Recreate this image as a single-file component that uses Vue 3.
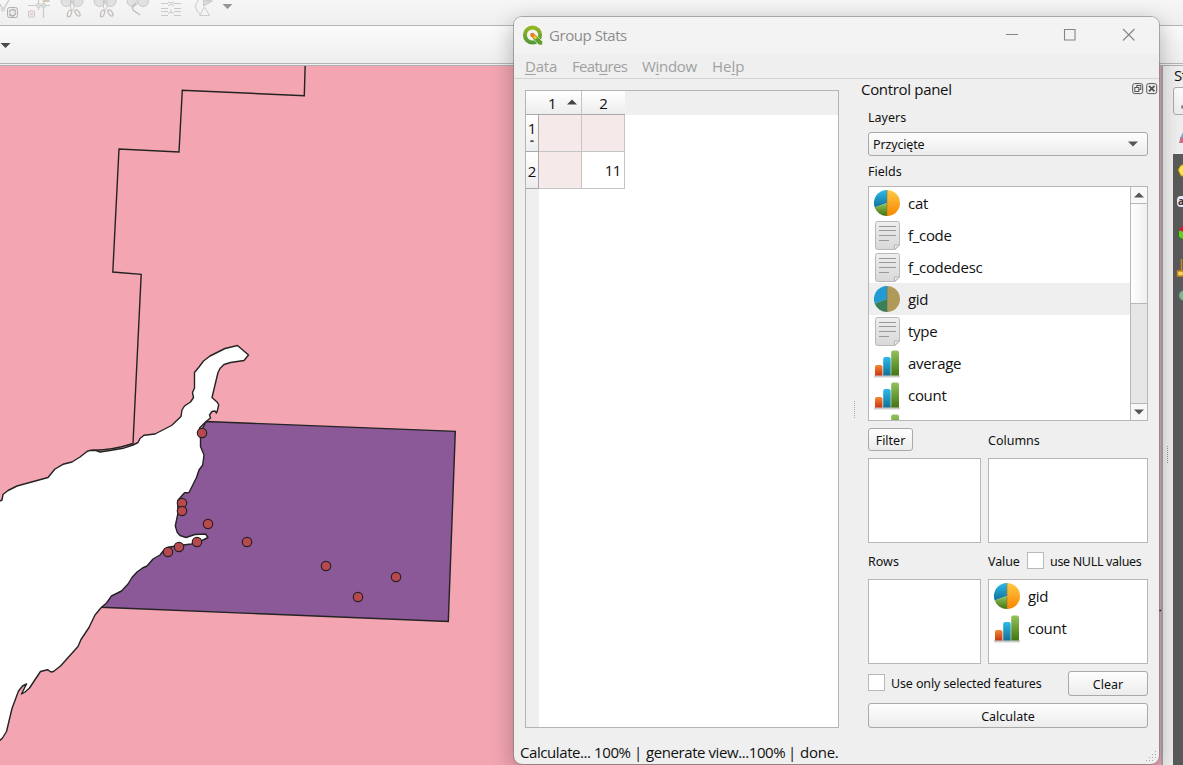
<script setup>
const fields = [
  { name: 'cat', icon: 'pie' },
  { name: 'f_code', icon: 'doc' },
  { name: 'f_codedesc', icon: 'doc' },
  { name: 'gid', icon: 'pie', active: true },
  { name: 'type', icon: 'doc' },
  { name: 'average', icon: 'bars' },
  { name: 'count', icon: 'bars' },
  { name: '', icon: 'bars' },
]
const values = [
  { name: 'gid', icon: 'pie' },
  { name: 'count', icon: 'bars' },
]
const points = [
  [202, 433], [182, 503], [182, 511], [208, 524], [247, 542], [197, 542],
  [179, 547], [168, 552], [326, 566], [396, 577], [358, 597],
]
const menus = [['', 'D', 'ata'], ['Feat', 'u', 'res'], ['W', 'i', 'ndow'], ['He', 'l', 'p']]
const water =
  'M-2 502 L2 500 L3 494.500 L8 490.500 L17 486 L48 477.500 L55 469 L63 464.300 L72 462 L80 457 L87 451.500 L90 450.300 L96 450.500 L100 452 L110 450.500 L123 448.300 L133 445 L138 442.500 L140 438.500 L144 435.300 L155 434 L171.500 425.500 L181 416.500 L182 410 L184.500 406 L190.500 402 L193.500 397.500 L192.500 392.500 L194.500 388 L194.500 372.500 L199 367 L203.500 361 L210 356 L225 348.500 L237.500 345.500 L248.500 355 L244 360.500 L230.500 362.500 L224 364.500 L220 368.500 L218 372.500 L212 397.500 L217.500 402.500 L218.700 405 L217.500 410 L216.500 413 L215 411 L212 411.500 L209.500 415 L210.500 418 L206 421.500 L199.500 428 L200.500 438 L200.500 446.500 L204 455 L202.700 465 L199 470 L196.500 477.500 L189 492.500 L184.500 492.800 L177.700 500.500 L178 513 L175.300 526 L177.300 532.500 L180 535.500 L186 537.500 L195 534.500 L205.500 534 L208 537.500 L203 540 L191.500 544 L183 545 L168 547.300 L164 550 L160 555 L153 559 L147 566 L142.500 568 L137 572 L132 577.500 L128 584 L121.500 591 L111.500 596 L106.500 603 L101.500 607.300 L95 615 L89 627.500 L81 639.500 L78 646.500 L60.500 666 L53.500 671.500 L51 672 L47.500 669.700 L40.500 671.500 L29.500 688 L25 692 L21.500 694 L26.500 684 L22.500 686 L18.500 691 L12 708.500 L6.500 731.500 L2.500 738 L-2 742 Z'
</script>

<template>
  <div class="desktop">
    <svg class="defs" width="0" height="0">
      <defs>
        <linearGradient id="gBlue" x1="0" y1="0" x2="0" y2="1"><stop offset="0" stop-color="#2bbcec" /><stop offset="1" stop-color="#126f97" /></linearGradient>
        <linearGradient id="gOrange" x1="0" y1="0" x2="0" y2="1"><stop offset="0" stop-color="#fdca45" /><stop offset="1" stop-color="#f98500" /></linearGradient>
        <linearGradient id="gGreen" x1="0" y1="0" x2="0" y2="1"><stop offset="0" stop-color="#93c35b" /><stop offset="1" stop-color="#447411" /></linearGradient>
        <linearGradient id="gRed" x1="0" y1="0" x2="0" y2="1"><stop offset="0" stop-color="#f28a35" /><stop offset="1" stop-color="#c93511" /></linearGradient>
        <linearGradient id="gDoc" x1="0" y1="0" x2="0" y2="1"><stop offset="0" stop-color="#eeeeee" /><stop offset="1" stop-color="#d8d8d8" /></linearGradient>
        <linearGradient id="gQ" x1="0" y1="0" x2="0" y2="1"><stop offset="0" stop-color="#94b722" /><stop offset="1" stop-color="#559a35" /></linearGradient>
        <symbol id="pie" viewBox="0 0 28 32">
          <path d="M14 16V3a13 13 0 0 0-12.300 17.500z" fill="url(#gBlue)" />
          <path d="M14 16 1.700 20.500A13 13 0 0 0 14 29z" fill="url(#gGreen)" />
          <path d="M14 3a13 13 0 0 1 0 26z" fill="url(#gOrange)" />
          <path d="M14 3v26" stroke="#927b31" stroke-opacity=".6" />
        </symbol>
        <symbol id="pieActive" viewBox="0 0 28 32">
          <path d="M14 16V3a13 13 0 0 0-12.300 17.500z" fill="#219bd2" />
          <path d="M14 16 1.700 20.500A13 13 0 0 0 14 29z" fill="#397f58" />
          <path d="M14 3a13 13 0 0 1 0 26z" fill="#b09a59" />
          <path d="M14 3v26" stroke="#557c69" stroke-opacity=".7" />
        </symbol>
        <symbol id="doc" viewBox="0 0 28 32">
          <path d="M4.500 2.500h20q2 0 2 2V26l-4.500 4.500h-17.500q-2 0-2-2v-24q0-2 2-2z" fill="url(#gDoc)" stroke="#b9b9b9" />
          <path d="M21.500 30.500v-4.500h5z" fill="#eee" stroke="#b5b5b5" />
          <path d="M6 7.500h17M6 11.500h17M6 16.500h17M6 21.500h10" stroke="#999" />
        </symbol>
        <symbol id="bars" viewBox="0 0 28 32">
          <rect x="1" y="28" width="26" height="2.500" rx="1" fill="#ccc" />
          <path d="M2 28.500V20q0-2 2-2h3.500q2 0 2 2v8.500z" fill="url(#gRed)" />
          <path d="M10.200 28.500V12q0-2 2-2h3.500q2 0 2 2v16.500z" fill="url(#gBlue)" />
          <path d="M18.200 28.500V5.500q0-2 2-2H24q2 0 2 2v23z" fill="url(#gGreen)" />
        </symbol>
      </defs>
    </svg>

    <header class="bar bar-top">
      <svg width="240" height="25" viewBox="0 0 240 25" fill="none" stroke="#c9c9c9">
        <path d="M0 4 3 10 9 0" stroke-width="1.300" />
        <circle cx="3" cy="9.500" r="1.500" fill="#eee" />
        <rect x="7.500" y="7.500" width="10" height="10" rx="2" stroke="#b0b0b0" fill="#ececec" />
        <path d="M9.500 12a3 3 0 0 1 5.500-1v-1.500M15.500 13a3 3 0 0 1-5.500 1.500v1.500" stroke="#b5b5b5" stroke-width="1.500" />
        <path d="M28 5.500h22M38.500 0v10M43.500 0v18" stroke-width="1.200" />
        <rect x="37" y="4" width="3" height="3" fill="#eee" /><rect x="42" y="4" width="3" height="3" fill="#eee" />
        <rect x="28.500" y="11" width="6" height="6" rx="1" stroke="#d8bcbc" />
        <path d="m30 12.500 3 3m0-3-3 3" stroke="#d8bcbc" />
        <path d="M43.500 1h6" stroke="#d4c9b8" stroke-width="2" />
        <g v-for="x in [61, 94]" :key="x" :transform="`translate(${x} 0)`">
          <circle cx="5.500" cy="1" r="5.500" fill="#e0e2e0" /><circle cx="16.500" cy="1" r="5.500" fill="#e0e2e0" />
          <path d="M9.500 0v8l3 3M13 0v8l-3 3" />
          <ellipse cx="8.500" cy="13.500" rx="1.800" ry="3.500" transform="rotate(20 8.500 13.500)" stroke="#c8bbbb" stroke-width="1.300" />
          <ellipse cx="16.500" cy="13" rx="1.800" ry="3.500" transform="rotate(-35 16.500 13)" stroke="#c8bbbb" stroke-width="1.300" />
        </g>
        <circle cx="132.500" cy="1" r="5.500" fill="#e0e2e0" /><circle cx="143" cy="1" r="5.500" fill="#e0e2e0" />
        <path d="M136 3q-5 4-3 7l7 5" stroke="#bbb" stroke-width="1.200" />
        <path d="M161 3.500h7m6 0h7M161 8.500h7m6 0h7M161 11.500h7m6 0h7M161 15.500h7m6 0h7M168 2q3 2 6 0m-6 3.500q3-2 6 0m-6 8q3-3 6 0m-3-4v3" />
        <path d="M202 15q-6-3-6.500-8 0-4 3-7" /><path d="M203.500 0v6l9-5z" fill="#d9d9d9" />
        <path d="m204.500 7 5 8.500h-10z" fill="#f3f3f3" stroke="#ccc" />
        <path d="M222.500 4h10l-5 5z" fill="#969696" stroke="none" />
      </svg>
    </header>
    <div class="bar bar-second">
      <svg width="12" height="8" viewBox="0 0 12 8"><path d="M.500 1h10l-5 5z" fill="#4a4a4a" /></svg>
    </div>

    <main class="workspace">
      <svg class="map" width="1161" height="699" viewBox="0 66 1161 699">
        <path d="M206 421.500 455.300 431.300 448.300 621.500 101.500 607.300 147 540z" fill="#8b5997" stroke="#232323" stroke-width="1.400" />
        <path :d="water" fill="#fff" stroke="#232323" stroke-width="1.400" stroke-linejoin="round" />
        <path d="M305.300 60 304.300 95.700 182.300 90.300 179 152 119 149 112.800 272 141.200 274.300 133 443.500Q112 450.500 92 450.200" fill="none" stroke="#232323" stroke-width="1.400" />
        <path d="M1150 610.500h11" stroke="#232323" stroke-width="1.400" />
        <circle v-for="(p, i) in points" :key="i" :cx="p[0]" :cy="p[1]" r="4.700" fill="#b84a4f" stroke="#2b2023" stroke-width="1.200" />
      </svg>
      <div class="splitter"><i></i></div>
      <aside class="styling">
        <span class="styling-title">St</span>
        <div class="styling-combo"><i></i></div>
        <svg class="brush" width="10" height="14"><path d="M10 0 7 6l4 1z" fill="#70b7cf" /><path d="M7.500 5 6 11l6 0V6z" fill="#cf6f8a" /></svg>
        <div class="styling-tabs">
          <svg width="10" height="160" viewBox="1173 154 10 160">
            <path d="m1178 170 3-5h4v11h-4z" fill="#fbe34b" stroke="#a98a08" />
            <rect x="1177" y="196" width="12" height="11" rx="4" fill="#e8edf8" />
            <text x="1178" y="205" font-size="10" font-weight="bold" fill="#333">a</text>
            <path d="m1178.500 231 7-6v16l-7-4z" fill="#67ce28" stroke="#267f12" /><path d="m1178.500 230 5-5v7z" fill="#d61a35" />
            <path d="M1181.500 259v11M1177.500 271h6v5h-6z" fill="#f8d860" stroke="#c78721" stroke-width="1.500" />
            <circle cx="1184" cy="295.500" r="5" fill="#7eb996" stroke="#5a8f6c" />
          </svg>
        </div>
      </aside>
    </main>

    <section class="window">
      <div class="titlebar">
        <svg class="logo" width="22" height="22" viewBox="0 0 22 22">
          <circle cx="10.500" cy="10" r="7.600" fill="none" stroke="url(#gQ)" stroke-width="4" />
          <path d="m10.500 10.500 2.500-1.500 7.500 7.500v3.500h-3.500l-7-7z" fill="#62a130" stroke="#f3f3f3" stroke-width=".6" />
          <path d="m9.500 9 3 .5 2.800 3-2 2-3.500-3z" fill="#f4c82c" />
          <circle cx="10.400" cy="10" r="2.200" fill="#ee7b26" />
        </svg>
        <span class="title">Group Stats</span>
        <svg class="controls" width="136" height="16" viewBox="0 0 136 16" fill="none" stroke="#858585" stroke-width="1.100">
          <path d="M1 7.500h12M59.500 2.500h10.500v10.500H59.500zM118 2l11.500 11.500M129.500 2 118 13.500" />
        </svg>
      </div>
      <nav class="menubar">
        <span v-for="(m, i) in menus" :key="i" :class="'menu menu-' + i">{{ m[0] }}<u>{{ m[1] }}</u>{{ m[2] }}</span>
      </nav>
      <div class="content">
        <div class="table-frame">
          <div class="grid">
            <div class="th corner"></div>
            <div class="th col first">1<svg width="10" height="6"><path d="M0 5.500h10l-5-5z" fill="#444" /></svg></div>
            <div class="th col">2</div>
            <div class="rest"></div>
            <div class="th row"><span class="sorted">1</span><b></b></div>
            <div class="td shade"></div>
            <div class="td shade"></div>
            <div class="blank"></div>
            <div class="th row">2</div>
            <div class="td shade"></div>
            <div class="td num">11</div>
            <div class="blank"></div>
            <div class="rest"></div>
          </div>
        </div>
        <div class="handle"><i></i></div>
        <div class="panel">
          <div class="panel-title">
            <span>Control panel</span>
            <svg width="26" height="12" viewBox="0 0 26 12" fill="none" stroke="#555">
              <rect x=".7" y=".6" width="10" height="10" rx="2" /><rect x="4.800" y="2.500" width="4" height="4" /><rect x="2.800" y="4.500" width="4" height="4" fill="#efefef" />
              <rect x="14.700" y=".6" width="10" height="10" rx="2" /><path d="m17 2.900 5.500 5.500m0-5.500L17 8.400" stroke-width="2" />
            </svg>
          </div>
          <label class="lbl lbl-layers">Layers</label>
          <div class="combo"><span>Przycięte</span><svg width="10" height="6"><path d="M0 .5h10l-5 5z" fill="#555" /></svg></div>
          <label class="lbl lbl-fields">Fields</label>
          <div class="list fields">
            <div class="items">
              <div v-for="(f, i) in fields" :key="i" class="item" :class="{ active: f.active }">
                <svg width="28" height="32"><use :href="f.active ? '#pieActive' : '#' + f.icon" /></svg><span>{{ f.name }}</span>
              </div>
            </div>
            <div class="scroll">
              <div class="arrow"><svg width="10" height="6"><path d="M0 5.500h10l-5-5z" fill="#555" /></svg></div>
              <div class="thumb"></div>
              <div class="track"></div>
              <div class="arrow down"><svg width="10" height="6"><path d="M0 .5h10l-5 5z" fill="#555" /></svg></div>
            </div>
          </div>
          <div class="pair heads">
            <div><button class="btn filter">Filter</button></div>
            <label class="lbl columns">Columns</label>
          </div>
          <div class="pair"><div class="list box"></div><div class="list box"></div></div>
          <div class="pair heads2">
            <label class="lbl rows">Rows</label>
            <div class="value-head"><label class="lbl value">Value</label><i class="check"></i><label class="lbl nulls">use NULL values</label></div>
          </div>
          <div class="pair">
            <div class="list box"></div>
            <div class="list box">
              <div v-for="f in values" :key="f.name" class="item"><svg width="28" height="32"><use :href="'#' + f.icon" /></svg><span>{{ f.name }}</span></div>
            </div>
          </div>
          <div class="only"><i class="check"></i><label class="lbl selected">Use only selected features</label><button class="btn clear">Clear</button></div>
          <button class="btn calculate">Calculate</button>
        </div>
      </div>
      <footer class="status">
        <span class="s1">Calculate... 100%</span><span class="s2">|</span><span class="s3">generate view...100%</span><span class="s4">|</span><span class="s5">done.</span>
        <svg class="grip" width="12" height="12"><g fill="#aaa"><rect v-for="p in [[9,0],[6,3],[9,3],[3,6],[6,6],[9,6],[0,9],[3,9],[6,9]]" :key="p.join()" :x="p[0]" :y="p[1]" width="1" height="1" /></g></svg>
      </footer>
    </section>
  </div>
</template>

<style>
html, body { margin: 0; overflow: hidden; }
</style>
<style scoped>
* { box-sizing: border-box; }
.desktop { position: relative; width: 1183px; height: 765px; overflow: hidden; display: flex; flex-direction: column; background: #efefef; font: 15px/20px "Open Sans", "Noto Sans", sans-serif; color: #111; }
.defs { position: absolute; }
svg { display: block; flex: none; }
.bar { flex: none; border-bottom: 1px solid #b5b5b5; }
.bar-top { height: 26px; background: linear-gradient(#f6f6f6, #efefef); }
.bar-second { height: 38px; background: linear-gradient(#fbfbfb, #eee); padding-top: 16px; }
.workspace { flex: 1; display: flex; margin-top: 1px; border-top: 1px solid #b0b0b0; }
.map { background: #f3a5b2; }
.splitter { width: 12px; border-left: 2px solid #a9a9a9; display: flex; align-items: center; padding: 77px 0 0 4px; background: #efefef; }
.splitter i { height: 17px; border-left: 1px dotted #999; }
.styling { width: 10px; overflow: hidden; display: flex; flex-direction: column; background: #efefef; }
.styling-title { height: 20px; line-height: 19px; padding-left: 1px; white-space: nowrap; letter-spacing: -.5px; }
.styling-combo { height: 28px; margin-top: 1px; width: 30px; border: 1px solid #aaa; border-radius: 3px; background: linear-gradient(#fdfdfd, #ededed); padding: 17px 0 0 7px; }
.styling-combo i { display: block; width: 5px; height: 4px; border-radius: 2px; background: #888; }
.brush { margin-top: 17px; }
.styling-tabs { margin-top: 8px; flex: 1; background: #5a5a5a; }

.window { position: absolute; left: 513px; top: 16px; width: 647px; height: 749px; border: 1px solid rgba(120, 120, 120, .55); border-radius: 9px; background: #efefef; background-clip: padding-box; box-shadow: 0 6px 22px rgba(0, 0, 0, .28); display: flex; flex-direction: column; overflow: hidden; }
.titlebar { flex: none; height: 37px; background: #f3f3f3; display: flex; padding: 8px 0 0 8px; color: #8c8c8c; }
.title { margin-left: 5px; line-height: 20px; letter-spacing: -.45px; }
.controls { margin: 2px 18px 0 auto; }
.menubar { flex: none; height: 25px; border-bottom: 1px solid #d3d3d3; display: flex; padding: 2px 0 0 11px; color: #a0a0a0; }
.menu { white-space: nowrap; }
.menu u { text-underline-offset: 2px; }
.menu-0 { width: 47px; letter-spacing: -.2px; }
.menu-1 { width: 70px; letter-spacing: -.7px; }
.menu-2 { width: 70px; letter-spacing: -.3px; }
.content { flex: 1; display: flex; padding: 11px 0 0 11px; }
.table-frame { width: 314px; height: 638px; border: 1px solid #b4b4b4; background: #fff; }
.grid { height: 636px; display: grid; grid-template-columns: 13px 43px 43px 1fr; grid-template-rows: 24px 37px 37px 1fr; }
.th { background: linear-gradient(#fff, #ededed); border-bottom: 1px solid #a9a9a9; display: flex; align-items: center; justify-content: center; }
.col { border-right: 1px solid #c4c4c4; }
.col:not(.first) { border-right: 0; }
.first { justify-content: flex-start; padding-left: 9px; }
.first svg { margin: -2px 0 0 10px; }
.row { border-right: 1px solid #a9a9a9; padding-top: 2px; flex-direction: column; }
.sorted { line-height: 18px; margin-top: -7px; }
.row b { width: 4px; height: 2px; margin-top: 3px; background: #555; border-radius: 2px 2px 0 0; }
.td { border: solid #c5c5c5; border-width: 0 1px 1px 0; }
.shade { background: #f5eae9; }
.num { text-align: right; padding: 8px 3px 0 0; letter-spacing: -.4px; }
.rest { background: #efefef; }
.handle { width: 29px; display: flex; align-items: center; padding: 0 0 13px 15px; }
.handle i { height: 17px; border-left: 1px dotted #aaa; }
.panel { width: 280px; display: flex; flex-direction: column; }
.panel-title { margin: -11px -10px 0 -7px; height: 24px; display: flex; justify-content: space-between; letter-spacing: -.32px; }
.panel-title span { line-height: 20px; }
.panel-title svg { margin-top: 4px; }
.lbl, .btn { font-family: "Noto Sans", sans-serif; font-size: 12.500px; line-height: 16px; color: #111; white-space: nowrap; }
.lbl-layers { height: 29px; padding-top: 7px; }
.combo { height: 24px; border: 1px solid #a9a9a9; border-radius: 3px; background: linear-gradient(#fefefe, #ececec); display: flex; justify-content: space-between; align-items: center; padding: 0 9px 0 4px; font: 12.500px/16px "Noto Sans", sans-serif; letter-spacing: -.15px; }
.combo span { padding-top: 2px; }
.lbl-fields { height: 30px; padding-top: 8px; }
.list { border: 1px solid #b7b7b7; background: #fff; overflow: hidden; }
.fields { height: 235px; display: flex; }
.items { flex: 1; }
.item { display: flex; height: 32px; padding-left: 4px; align-items: center; letter-spacing: -.3px; }
.item span { margin-left: 7px; }
.active { background: #efefef; }
.scroll { width: 17px; border-left: 1px solid #b7b7b7; display: flex; flex-direction: column; }
.arrow { height: 17px; background: #f8f8f8; border-bottom: 1px solid #b7b7b7; padding: 5px 0 0 3px; }
.thumb { height: 100px; border-bottom: 1px solid #b7b7b7; background: linear-gradient(90deg, #fff, #efefef); }
.track { flex: 1; background: #e6e6e6; }
.down { border-bottom: 0; border-top: 1px solid #b7b7b7; }
.pair { display: grid; grid-template-columns: 113px 160px; gap: 7px; }
.heads { height: 37px; padding-top: 7px; }
.btn { border: 1px solid #a9a9a9; border-radius: 3px; background: linear-gradient(#fefefe, #ececec); padding: 3px 0 0; text-align: center; }
.filter { width: 45px; height: 23px; display: block; }
.columns { padding-top: 5px; }
.box { height: 85px; }
.heads2 { height: 36px; }
.rows, .value { padding-top: 11px; }
.value-head { display: flex; }
.value { width: 32px; letter-spacing: -.1px; }
.check { display: block; width: 17px; height: 17px; background: #fff; border: 1px solid #b9b9b9; flex: none; }
.value-head .check { margin: 9px 6px 0 7px; }
.nulls { padding-top: 11px; letter-spacing: -.33px; }
.only { display: flex; margin-top: 7px; height: 25px; }
.only .check { margin: 3px 6px 0 0; }
.selected { padding-top: 5px; letter-spacing: -.13px; }
.clear { width: 80px; height: 25px; margin-left: auto; }
.calculate { height: 25px; margin-top: 7px; flex: none; }
.status { flex: none; height: 22px; display: flex; padding-left: 6px; white-space: nowrap; letter-spacing: -.42px; }
.s1 { width: 114px; }
.s2 { width: 12px; }
.s3 { width: 142px; }
.s4 { width: 12px; }
.s5 { letter-spacing: -.25px; }
.grip { margin: 9px 1px 0 auto; }
</style>
